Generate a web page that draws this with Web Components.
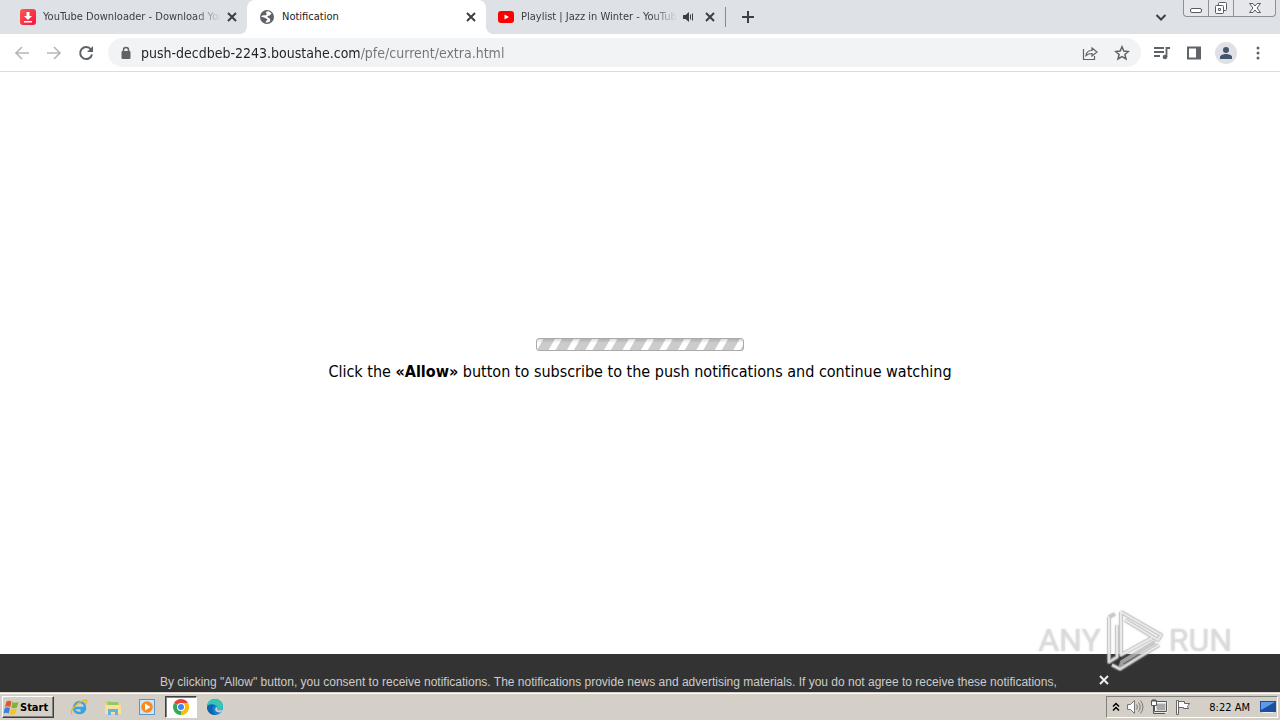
<!DOCTYPE html>
<html lang="en">
<head>
<meta charset="utf-8">
<title>Notification</title>
<style>
html, body { height: 100%; margin: 0; }
body { font-family: "DejaVu Sans Condensed", "DejaVu Sans", sans-serif; overflow: hidden; }
</style>
</head>
<body>
<desktop-screen></desktop-screen>

<template id="desktop-screen">
<style>
:host { display: flex; flex-direction: column; height: 100%; background: #fff; position: relative; }
push-page { flex: 1; min-height: 0; }
any-run-mark { position: absolute; right: 48px; bottom: 48px; }
</style>
<tab-strip>
  <browser-tab label="YouTube Downloader - Download You">
    <svg width="16" height="16" viewBox="0 0 16 16" aria-hidden="true"><defs><linearGradient id="g" x2="1" y2="1"><stop stop-color="#ff5a4d"/><stop offset="1" stop-color="#f01545"/></linearGradient></defs><rect width="16" height="16" rx="3" fill="url(#g)"/><path d="M6.500 3h3v4H12L8 11 4 7h2.500zM4 12h8v1.500H4z" fill="#fff"/></svg>
  </browser-tab>
  <browser-tab label="Notification" active>
    <svg width="16" height="16" viewBox="0 0 16 16" aria-hidden="true"><circle cx="8" cy="8" r="7" fill="#5f6368"/><path d="M9 2.300C7 2.500 6.500 4 7.500 4.700c.6.800-.2 1.800-1.500 1.600C4.800 6.200 2.600 6.500 2.200 8c1.300.4 3.300.2 4.500 1.200 1 .8 2 .5 1.700 1.500-.3.800-1.500.8-1.700 2.700 1.500.3 3.500-.2 4.500-1.500.3-1.300-.3-1.900-.8-2.600-.6-.8-1.900-.8-2-1.900 0-.9 1.300-.7 2.300-1 1.200-.4.500-1.400 1.900-1.600C11.800 3.500 10.500 2.600 9 2.300z" fill="#fff"/></svg>
  </browser-tab>
  <browser-tab label="Playlist | Jazz in Winter - YouTub" audio>
    <svg width="16" height="16" viewBox="0 0 16 16" aria-hidden="true"><rect y="2" width="16" height="12" rx="3" fill="#f00"/><path d="M6.500 5.500v5L11 8z" fill="#fff"/></svg>
  </browser-tab>
</tab-strip>
<browser-toolbar></browser-toolbar>
<push-page></push-page>
<task-bar></task-bar>
<any-run-mark></any-run-mark>
</template>

<template id="tab-strip">
<style>
:host { display: flex; align-items: stretch; height: 34px; background: #dee1e6; padding-left: 8px; color: #3c4043; flex: none; }
button { border: 0; background: none; padding: 0; color: inherit; display: grid; place-items: center; }
.tabs { display: flex; flex: 0 1 717px; min-width: 0; }
.rule { width: 1px; height: 20px; align-self: center; background: #868a90; }
.new { width: 44px; }
.space { flex: 1; }
.search { width: 32px; margin-right: 6px; }
.window { display: flex; height: 17px; border: 1px solid #8c9097; border-top: 0; border-radius: 0 0 4px 4px; background: #e5e7eb; box-sizing: border-box; margin-right: 4px; }
.window button { width: 25px; border-right: 1px solid #8c9097; }
.window button:last-child { width: 41px; border: 0; }
</style>
<div class="tabs" role="tablist"><slot></slot></div>
<span class="rule"></span>
<button class="new" aria-label="New tab"><svg width="14" height="14" viewBox="0 0 14 14"><path d="M7 1v12M1 7h12" stroke="currentColor" stroke-width="2"/></svg></button>
<span class="space"></span>
<button class="search" aria-label="Search tabs"><svg width="12" height="12" viewBox="0 0 12 12"><path d="M1.500 4 6 8.500 10.500 4" fill="none" stroke="currentColor" stroke-width="2"/></svg></button>
<div class="window">
  <button aria-label="Minimize"><svg width="14" height="14" viewBox="0 0 14 14"><rect x="1.500" y="7.500" width="11" height="4" rx="1.500" fill="#fff" stroke="#555a66"/></svg></button>
  <button aria-label="Restore"><svg width="14" height="14" viewBox="0 0 14 14"><g fill="#fff" stroke="#555a66"><rect x="4.500" y="1.500" width="8" height="8" rx="1"/><rect x="1.500" y="4.500" width="8" height="8" rx="1"/><path d="M4.500 7.500h2v2h-2z"/></g></svg></button>
  <button aria-label="Close"><svg width="14" height="14" viewBox="0 0 14 14"><path d="M1.500 2.500h3.300L7 5l2.200-2.500h3.300L9 7l3.500 4.500H9.200L7 9l-2.200 2.500H1.500L5 7z" fill="#fff" stroke="#555a66"/></svg></button>
</div>
</template>

<template id="browser-tab">
<style>
:host { display: flex; align-items: center; flex: 0 1 239px; min-width: 0; box-sizing: border-box; padding: 0 6px 0 12px; font-size: 11px; position: relative; color: #3c4043; }
:host([active]) { background: #fff; border-radius: 8px 8px 0 0; color: #202124; }
:host([active])::before, :host([active])::after { content: ""; position: absolute; bottom: 0; width: 8px; height: 8px; }
:host([active])::before { right: 100%; background: radial-gradient(circle at 0 0, transparent 8px, #fff 8px); }
:host([active])::after { left: 100%; background: radial-gradient(circle at 100% 0, transparent 8px, #fff 8px); }
::slotted(svg) { flex: none; }
.title { flex: 1; min-width: 0; margin-left: 7px; overflow: hidden; white-space: nowrap; line-height: 18px; }
.title.long { -webkit-mask-image: linear-gradient(90deg, #000 calc(100% - 28px), transparent calc(100% - 2px)); mask-image: linear-gradient(90deg, #000 calc(100% - 28px), transparent calc(100% - 2px)); }
button { border: 0; background: none; padding: 0; width: 18px; height: 18px; display: grid; place-items: center; color: #3c4043; flex: none; }
.audio { display: none; margin-right: 4px; }
:host([audio]) .audio { display: grid; }
</style>
<slot></slot>
<span class="title" role="tab"></span>
<button class="audio" aria-label="Mute tab"><svg width="12" height="12" viewBox="0 0 12 12"><path d="M1 4h2.500L7 1v10L3.500 8H1z" fill="currentColor"/><path d="M8.500 3.500v5M10.500 2.500v7" stroke="currentColor"/></svg></button>
<button aria-label="Close tab"><svg width="10" height="10" viewBox="0 0 10 10"><path d="m1 1 8 8M9 1 1 9" stroke="currentColor" stroke-width="2"/></svg></button>
</template>

<template id="browser-toolbar">
<style>
:host { display: flex; align-items: center; flex: none; height: 38px; box-sizing: border-box; background: #fff; border-bottom: 1px solid #dadce0; padding: 0 6px; color: #5f6368; }
button { border: 0; background: none; padding: 0; width: 32px; height: 28px; display: grid; place-items: center; color: inherit; flex: none; }
button:disabled { color: #b4b7bb; }
form { flex: 1; min-width: 0; display: flex; align-items: center; height: 29px; margin: 0 5px 0 6px; padding: 0 3px 0 10px; border-radius: 15px; background: #f1f3f4; }
form .lock { width: 16px; }
input { flex: 1; min-width: 0; border: 0; outline: 0; margin: 0 8px 0 7px; padding: 0; height: 24px; font: 14px "DejaVu Sans Condensed", "DejaVu Sans", sans-serif; color: #202124; -webkit-text-fill-color: transparent; background: linear-gradient(90deg, #202124 219px, #70757a 219px); -webkit-background-clip: text; background-clip: text; }
.avatar { width: 22px; height: 22px; border-radius: 50%; background: #dfe1e5; display: grid; place-items: center; color: #44546f; }
</style>
<button disabled aria-label="Back"><svg width="16" height="16" viewBox="0 0 16 16"><path d="M15 8H2M8 2 2 8l6 6" fill="none" stroke="currentColor" stroke-width="1.700"/></svg></button>
<button disabled aria-label="Forward"><svg width="16" height="16" viewBox="0 0 16 16"><path d="M1 8h13M8 2l6 6-6 6" fill="none" stroke="currentColor" stroke-width="1.700"/></svg></button>
<button aria-label="Reload"><svg width="16" height="16" viewBox="0 0 16 16"><path d="M13 4.500A6 6 0 1 0 14 9.500" fill="none" stroke="currentColor" stroke-width="2"/><path d="M15 1v6H9z" fill="currentColor"/></svg></button>
<form>
  <button class="lock" type="button" aria-label="Site information"><svg width="12" height="14" viewBox="0 0 12 14"><rect x="1.500" y="5" width="9" height="8" rx="1" fill="currentColor"/><path d="M3.500 5.500V4a2.500 2.500 0 0 1 5 0v1.500" fill="none" stroke="currentColor" stroke-width="1.500"/></svg></button>
  <input type="text" aria-label="Address" value="push-decdbeb-2243.boustahe.com/pfe/current/extra.html">
  <button type="button" aria-label="Share"><svg width="16" height="16" viewBox="0 0 16 16"><path d="M1.500 4v10.500h11V11M4 10.500c.3-3.500 2.500-5 6-5V3l5 4-5 4V8.500c-3 0-4.500.5-6 2z" fill="none" stroke="currentColor" stroke-width="1.200"/></svg></button>
  <button type="button" aria-label="Bookmark this tab"><svg width="16" height="16" viewBox="0 0 16 16"><path d="m8 1.800 1.800 4.300 4.600.4-3.500 3 1.100 4.500L8 11.600 4 14l1.100-4.500-3.500-3 4.600-.4z" fill="none" stroke="currentColor" stroke-width="1.500"/></svg></button>
</form>
<button aria-label="Media controls"><svg width="16" height="16" viewBox="0 0 16 16"><path d="M0 3h10M0 7h10M0 11h6M12.500 12V3H16" fill="none" stroke="currentColor" stroke-width="1.800"/><circle cx="11" cy="12" r="2.300" fill="currentColor"/></svg></button>
<button aria-label="Side panel"><svg width="14" height="14" viewBox="0 0 14 14"><path d="M1 1.500h12v11H1z" fill="none" stroke="currentColor" stroke-width="2"/><path d="M9 1h4v12H9z" fill="currentColor"/></svg></button>
<button aria-label="Profile"><span class="avatar"><svg width="14" height="14" viewBox="0 0 14 14" fill="currentColor"><circle cx="7" cy="4" r="3"/><path d="M1 13v-2c0-2 3.500-3 6-3s6 1 6 3v2z"/></svg></span></button>
<button aria-label="Menu"><svg width="4" height="14" viewBox="0 0 4 14" fill="currentColor"><circle cx="2" cy="2" r="1.500"/><circle cx="2" cy="7" r="1.500"/><circle cx="2" cy="12" r="1.500"/></svg></button>
</template>

<template id="push-page">
<style>
:host { display: flex; flex-direction: column; background: #fff; }
main { flex: 1; display: flex; flex-direction: column; align-items: center; justify-content: center; gap: 9px; padding-bottom: 4px; }
.bar { width: 206px; height: 11px; border: 1px solid #aaa; border-radius: 3px; background: linear-gradient(#0002, transparent 4px), repeating-linear-gradient(120deg, #fff 0 5px, #ccc 6px 15px, #fff 16px); }
p { margin: 0; font: 16px/24px "DejaVu Sans Condensed", "DejaVu Sans", sans-serif; color: #000; }
footer { flex: none; display: flex; align-items: flex-start; height: 38px; box-sizing: border-box; padding: 16px 160px 0; background: #333; color: #ccc; font: 12px/24px "Liberation Sans", Arial, sans-serif; overflow: hidden; }
footer p { flex: 1; font: inherit; color: inherit; white-space: nowrap; }
footer button { border: 0; background: none; padding: 0; width: 32px; height: 20px; display: grid; place-items: center; color: #eee; }
</style>
<main>
  <div class="bar" role="progressbar" aria-label="Loading"></div>
  <p>Click the <b>«Allow»</b> button to subscribe to the push notifications and continue watching</p>
</main>
<footer>
  <p>By clicking "Allow" button, you consent to receive notifications. The notifications provide news and advertising materials. If you do not agree to receive these notifications,</p>
  <button aria-label="Close"><svg width="10" height="10" viewBox="0 0 10 10"><path d="m1 1 8 8M9 1 1 9" stroke="currentColor" stroke-width="2"/></svg></button>
</footer>
</template>

<template id="task-bar">
<style>
:host { display: flex; align-items: center; flex: none; height: 28px; box-sizing: border-box; background: #d4d0c8; border-top: 1px solid #d4d0c8; box-shadow: inset 0 1px #fff; padding: 1px 2px 0; color: #000; }
button { border: 0; background: none; padding: 0; display: grid; place-items: center; color: inherit; flex: none; }
.start { display: flex; align-items: center; width: 52px; height: 22px; border: 1px solid; border-color: #fff #404040 #404040 #fff; box-shadow: inset -1px -1px #808080; font: bold 11px "DejaVu Sans Condensed", "DejaVu Sans", sans-serif; box-sizing: border-box; }
nav { display: flex; flex: 1; margin-left: 9px; gap: 2px; }
nav button { width: 32px; height: 22px; box-sizing: border-box; }
nav button[aria-pressed] { background: #fff; border: 1px solid; border-color: #404040 #fff #fff #404040; box-shadow: inset 1px 1px #808080; }
.tray { display: flex; align-items: center; height: 22px; box-sizing: border-box; border: 1px solid; border-color: #808080 #fff #fff #808080; padding-left: 2px; }
.tray button { width: 24px; height: 20px; }
.tray .more { width: 14px; }
.tray .desk { width: 18px; }
time { font-size: 11px; margin: 0 9px 0 14px; white-space: nowrap; }
</style>
<button class="start"><svg width="17" height="17" viewBox="0 0 17 17" aria-hidden="true"><path d="M3.500 2.500Q6 1 8.500 2.500L7.300 8Q4.500 6.500 2 8z" fill="#e8522a"/><path d="M9.500 3Q12 4.500 15.500 3L14 8.500Q11 10 8.300 8.500z" fill="#7db72f"/><path d="M1.700 9Q4.500 7.500 7 9L5.700 14.500Q3 13 .5 14.500z" fill="#3b82d6"/><path d="M8 9.500Q11 11 13.700 9.500L12.300 15Q9.500 16.500 6.700 15z" fill="#f8c327"/></svg>Start</button>
<nav aria-label="Programs">
  <button aria-label="Internet Explorer"><svg width="18" height="18" viewBox="0 0 18 18"><path d="M4 10h11c.3-8-10.500-8-11 0 .2 6 8.500 6.500 10.500 2h-4" fill="none" stroke="#38a5e0" stroke-width="2.500"/><path d="M2 16C-1 13 8 3 16 2c2 1 0 3-1 4" fill="none" stroke="#e9b52c" stroke-width="1.300"/></svg></button>
  <button aria-label="File Explorer"><svg width="18" height="18" viewBox="0 0 18 18"><path d="M2 3h5l1 2h7v11H2z" fill="#e7c65a"/><path d="M4 4h10v4H4z" fill="#8fc96b"/><path d="M1 7h16v9H1z" fill="#f8e29a"/><path d="M4 17v-6h10v6h-3v-3H7v3z" fill="#65b4df"/></svg></button>
  <button aria-label="Media Player"><svg width="18" height="18" viewBox="0 0 18 18"><rect x="1.500" y="1.500" width="15" height="15" fill="#cfe4f5" stroke="#5b97c9"/><circle cx="9" cy="9" r="5.800" fill="#f68b1f"/><path d="M7 5.500v7L12.500 9z" fill="#fff"/></svg></button>
  <button aria-pressed="true" aria-label="Google Chrome"><svg width="16" height="16" viewBox="0 0 16 16"><path d="M8 8 1.100 4A8 8 0 0 1 14.900 4z" fill="#ea4335"/><path d="M8 8l6.900-4A8 8 0 0 1 8 16z" fill="#fbbc05"/><path d="M8 8v8A8 8 0 0 1 1.100 4z" fill="#34a853"/><path d="M8 4h6.900A8 8 0 0 1 8 16l3.500-6z" fill="#fbbc05"/><circle cx="8" cy="8" r="4" fill="#fff"/><circle cx="8" cy="8" r="3" fill="#4285f4"/></svg></button>
  <button aria-label="Microsoft Edge"><svg width="18" height="18" viewBox="0 0 18 18"><circle cx="9" cy="9" r="8" fill="#1480d0"/><path d="M1 9a8 8 0 0 1 16 0c0 3-4 4-6 2.500 1-1 .5-4-2.500-4.500S2 7 1 9z" fill="#35c6b4"/><path d="M10 9c1.500.5 2 1.800 1 2.500 2 1.500 4.500.8 5.800-.3-.5 1.300-1.300 2.300-2.300 3-3 1-7-1.200-4.500-5.200z" fill="#d4d0c8"/><path d="M1 9c1-3 5-3.500 8-2-4 2-3 7 1 9.900C5 17.500 1 14 1 9z" fill="#1063b0"/></svg></button>
</nav>
<div class="tray">
  <button class="more" aria-label="Show hidden icons"><svg width="8" height="10" viewBox="0 0 8 10"><path d="m1 4.500 3-3 3 3M1 8.500l3-3 3 3" fill="none" stroke="#000" stroke-width="1.500"/></svg></button>
  <button aria-label="Volume"><svg width="18" height="16" viewBox="0 0 18 16"><path d="M1.500 5.500h3l4-4v13l-4-4h-3z" fill="#fff" stroke="#777"/><path d="M10.500 5.500q2 2.500 0 5M12.500 3.500q3.500 4.500 0 9M14.500 1.500q5 6.500 0 13" fill="none" stroke="#777"/></svg></button>
  <button aria-label="Network"><svg width="18" height="16" viewBox="0 0 18 16"><path d="M5.500 3.500h11v9h-11z" fill="#aaa" stroke="#fff" stroke-width="2"/><path d="M4.500 2.500h12v10h-12zM7 14.500h8M3.500 7v7.500H7" fill="none" stroke="#555"/><path d="M1.500 1.500h5v5h-5z" fill="#fff" stroke="#555"/><path d="M3 0v3M5 0v3" stroke="#555"/></svg></button>
  <button aria-label="Action Center"><svg width="18" height="16" viewBox="0 0 18 16"><path d="M4.500 2.500h6v2h5l-2 3 1 2h-5v-1h-5z" fill="#fff" stroke="#666"/><path d="M2.500 1.500h2v14h-2z" fill="#fff" stroke="#666"/></svg></button>
  <time>8:22 AM</time>
  <button class="desk" aria-label="Show desktop"><svg width="16" height="14" viewBox="0 0 16 14"><path d="M0 1h16v11H0z" fill="#1c4fa0"/><path d="M1 2h14L1 10z" fill="#5b9be8"/><path d="M3 12h10v1H3z" fill="#eef"/></svg></button>
</div>
</template>

<template id="any-run-mark">
<style>
:host { display: flex; align-items: center; gap: 4px; pointer-events: none; color: #ddddddb0; font: 32px/40px Roboto, sans-serif; text-shadow: 0 0 2px #aaa8; }
svg { filter: drop-shadow(0 0 1px #aaa8); }
</style>
<span>ANY</span>
<svg width="60" height="64" viewBox="0 0 60 64" fill="none" stroke-linejoin="round" aria-hidden="true"><path d="M4 9v45l8-5V17M4 9l6-3M16 4l40 23-3 5-33-20M16 4v43l31-17M7 57l8 4 39-24M15 61l2-7 33-20" stroke="#bcbcbcb0" stroke-width="4"/><path d="M4 9v45l8-5V17M16 4l40 23-3 5-33-20M16 4v43l31-17M7 57l8 4 39-24" stroke="#ffffffa0" stroke-width="2"/></svg>
<span>RUN</span>
</template>

<script>
class TemplateElement extends HTMLElement {
  constructor() {
    super();
    const template = document.getElementById(this.localName);
    this.attachShadow({ mode: "open" }).append(template.content.cloneNode(true));
  }
}
class BrowserTab extends TemplateElement {
  connectedCallback() {
    const title = this.shadowRoot.querySelector(".title");
    title.textContent = this.getAttribute("label");
    title.setAttribute("aria-selected", this.hasAttribute("active"));
    title.classList.toggle("long", title.textContent.length > 20);
  }
}
customElements.define("browser-tab", BrowserTab);
for (const name of ["tab-strip", "browser-toolbar", "push-page", "task-bar", "any-run-mark", "desktop-screen"]) {
  customElements.define(name, class extends TemplateElement {});
}
</script>
</body>
</html>
